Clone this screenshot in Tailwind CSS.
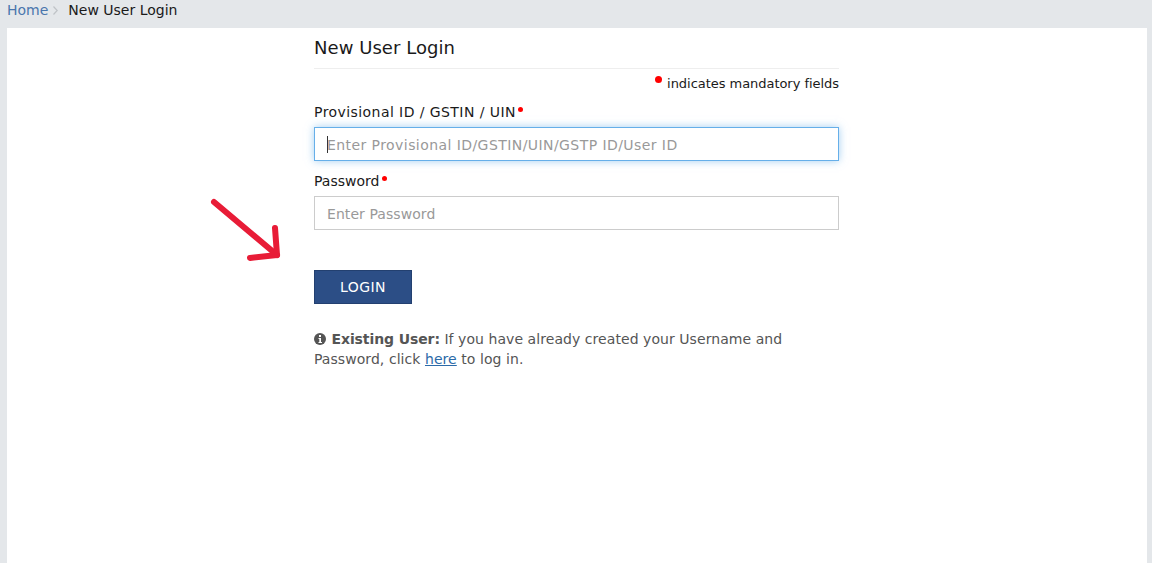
<!DOCTYPE html>
<html lang="en">
<head>
  <meta charset="UTF-8">
  <title>New User Login</title>
  <script src="https://cdn.jsdelivr.net/npm/@tailwindcss/browser@4"></script>
</head>
<body class="bg-[#e4e7ea] h-[563px] overflow-hidden font-['DejaVu_Sans',sans-serif] text-[14px] text-[#1a1a1a]">
  <!-- Breadcrumb -->
  <div class="h-[28px] px-[7px] flex items-start leading-[20px]">
    <a href="#" class="text-[#4a76ad]">Home</a>
    <svg class="ml-[5px] mr-[10px] mt-[6px]" width="5" height="9" viewBox="0 0 5 9" fill="none" stroke="#bfc3c7" stroke-width="1.2"><path d="M0.5 0.5 L4.2 4.5 L0.5 8.5"></path></svg>
    <span>New User Login</span>
  </div>

  <!-- Main panel -->
  <div class="relative mx-[7px] w-[1140px] h-[535px] bg-white pl-[307px]">
    <svg class="absolute left-[203px] top-[170px]" width="72" height="64" viewBox="0 0 72 64" fill="none" stroke="#e81c37" stroke-width="6" stroke-linecap="round" stroke-linejoin="round">
      <path d="M4 4 L67 57"></path>
      <path d="M65 30 L67 57 L40 60"></path>
    </svg>

    <div class="w-[525px]">
      <h1 class="h-[41px] pt-[8px] text-[18px] leading-[24px] tracking-[0.05px] border-b border-[#eeeeee]">New User Login</h1>

      <p class="mt-[5px] h-[20px] text-right text-[13px] leading-[20px] tracking-[-0.04px]"><span class="inline-block align-[5px] w-[7px] h-[7px] rounded-full bg-[#ff0000] mr-[5px]"></span>indicates mandatory fields</p>

      <label class="mt-[8px] block h-[20px] leading-[20px] tracking-[0.43px]">Provisional ID / GSTIN / UIN<span class="inline-block align-[5px] w-[5px] h-[5px] rounded-full bg-[#ff0000] ml-[2px]"></span></label>
      <div class="mt-[5px] h-[34px] border border-[#66afe9] shadow-[0_0_8px_rgba(102,175,233,0.6)] pl-[12px] pt-[2px] flex items-center text-[#999999] leading-[20px] tracking-[0.43px]">
        <span class="w-px h-[17px] -mt-[2px] -mr-px bg-[#333333]"></span>Enter Provisional ID/GSTIN/UIN/GSTP ID/User ID
      </div>

      <label class="mt-[10px] block h-[20px] leading-[20px]">Password<span class="inline-block align-[5px] w-[5px] h-[5px] rounded-full bg-[#ff0000] ml-[3px]"></span></label>
      <div class="mt-[5px] h-[34px] border border-[#cccccc] pl-[12px] pt-[2px] flex items-center text-[#999999] leading-[20px] tracking-[0.07px]">Enter Password</div>

      <button class="mt-[40px] block w-[98px] h-[34px] bg-[#2c4e86] border border-[#234070] text-white text-[14px] tracking-[0.45px]">LOGIN</button>

      <div class="mt-[25px] leading-[20px] text-[#555555] tracking-[0.06px] whitespace-nowrap">
        <p>
          <svg class="inline-block align-[-1px] mr-[1px]" width="12" height="12" viewBox="0 0 12 12"><circle cx="6" cy="6" r="6" fill="#555555"></circle><rect x="5" y="2" width="2" height="2" fill="#ffffff"></rect><path d="M4.5 5H7V9H8V10H4.5V9H5.3V6H4.5Z" fill="#ffffff"></path></svg>
          <b class="tracking-[-0.1px]">Existing User:</b> If you have already created your Username and
        </p>
        <p>Password, click <a href="#" class="text-[#2c6aa8] underline">here</a> to log in.</p>
      </div>
    </div>
  </div>
</body>
</html>
